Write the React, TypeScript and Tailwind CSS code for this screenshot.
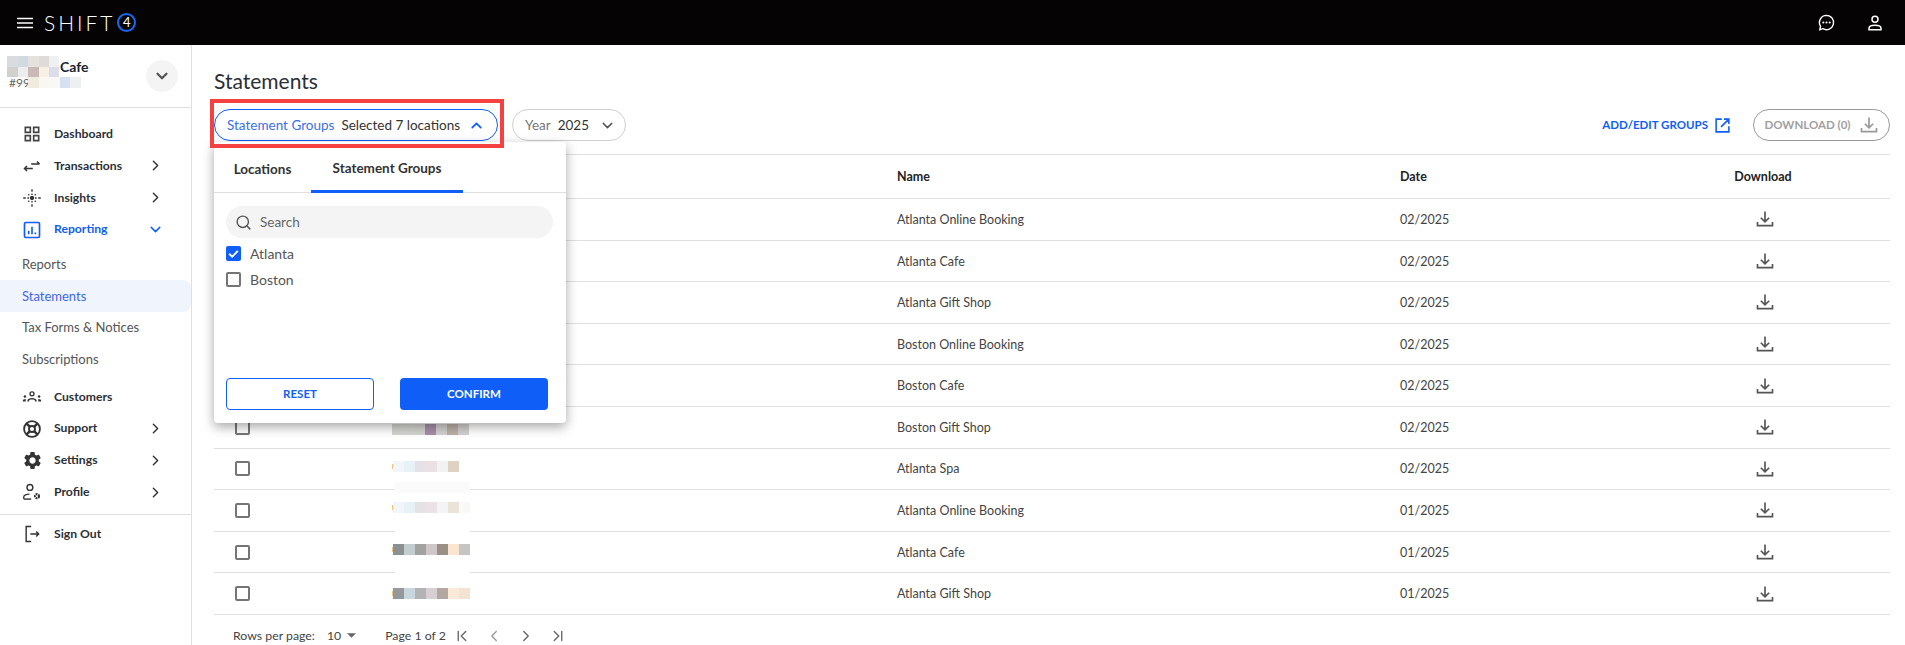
import { ChevronDown, ChevronFirst, ChevronLast, ChevronLeft, ChevronRight, ChevronUp, Search } from "lucide-react";
import type { ReactNode } from "react";

const ICON = "w-[20px] h-[20px] shrink-0";

function GridIcon() {
    return (
        <svg viewBox="0 0 24 24" className={ICON} fill="#444">
            <path d="M3 3v8h8V3H3zm6 6H5V5h4v4zm-6 4v8h8v-8H3zm6 6H5v-4h4v4zm4-16v8h8V3h-8zm6 6h-4V5h4v4zm-6 4v8h8v-8h-8zm6 6h-4v-4h4v4z" />
        </svg>
    );
}

function SwapIcon() {
    return (
        <svg viewBox="0 0 24 24" className={ICON} fill="none" stroke="#333" strokeWidth="1.8">
            <path d="M11 9.5h10M18 6.5l3 3M3 15h10M6 12l-3 3 3 3" />
        </svg>
    );
}

function InsightsIcon() {
    return (
        <svg viewBox="0 0 24 24" className={ICON} fill="none" stroke="#333" strokeWidth="1.6">
            <circle cx="12" cy="12" r="2.6" fill="#333" stroke="none" />
            <path d="M12 1.5v3M12 6.5v2M12 15.5v2M12 19.5v3M1.5 12h3M6.5 12h2M15.5 12h2M19.5 12h3M7.5 7.5l1.2 1.2M16.5 7.5l-1.2 1.2M7.5 16.5l1.2-1.2M16.5 16.5l-1.2-1.2" />
        </svg>
    );
}

function ReportIcon() {
    return (
        <svg viewBox="0 0 24 24" className={ICON} fill="none" stroke="#0f5ef7" strokeWidth="2">
            <rect x="3" y="3" width="18" height="18" rx="1.5" />
            <path d="M8 17v-4M12 17V8M16 17v-2" />
        </svg>
    );
}

function GroupIcon() {
    return (
        <svg viewBox="0 0 24 24" className={ICON} fill="#333">
            <circle cx="12" cy="8.2" r="2.4" fill="none" stroke="#333" strokeWidth="1.6" />
            <path d="M6.5 17.5v-1.2c0-2 2.6-3.2 5.5-3.2s5.5 1.2 5.5 3.2v1.2h-2v-1.2c0-.7-1.5-1.4-3.5-1.4s-3.5.7-3.5 1.4v1.2z" />
            <circle cx="3.5" cy="11.5" r="1.5" />
            <circle cx="20.5" cy="11.5" r="1.5" />
            <path d="M1 17.5v-1c0-1.3 1.2-2.2 3.5-2.2v3.2zM23 17.5v-1c0-1.3-1.2-2.2-3.5-2.2v3.2z" />
        </svg>
    );
}

function SupportIcon() {
    return (
        <svg viewBox="0 0 24 24" className={ICON} fill="none" stroke="#333" strokeWidth="2.2">
            <circle cx="12" cy="12" r="9.5" />
            <circle cx="12" cy="12" r="3.6" />
            <path d="M5.5 5.5l4 4M18.5 5.5l-4 4M5.5 18.5l4-4M18.5 18.5l-4-4" strokeWidth="3" />
        </svg>
    );
}

function SettingsIcon() {
    return (
        <svg viewBox="0 0 24 24" className="w-[21px] h-[21px] shrink-0" fill="#333">
            <path d="M19.14 12.94c.04-.3.06-.61.06-.94 0-.32-.02-.64-.07-.94l2.03-1.58c.18-.14.23-.41.12-.61l-1.92-3.32c-.12-.22-.37-.29-.59-.22l-2.39.96c-.5-.38-1.03-.7-1.62-.94l-.36-2.54c-.04-.24-.24-.41-.48-.41h-3.84c-.24 0-.43.17-.47.41l-.36 2.54c-.59.24-1.13.57-1.62.94l-2.39-.96c-.22-.08-.47 0-.59.22L2.74 8.87c-.12.21-.08.47.12.61l2.03 1.58c-.05.3-.09.63-.09.94s.02.64.07.94l-2.03 1.58c-.18.14-.23.41-.12.61l1.92 3.32c.12.22.37.29.59.22l2.39-.96c.5.38 1.03.7 1.62.94l.36 2.54c.05.24.24.41.48.41h3.84c.24 0 .44-.17.47-.41l.36-2.54c.59-.24 1.13-.56 1.62-.94l2.39.96c.22.08.47 0 .59-.22l1.92-3.32c.12-.22.07-.47-.12-.61l-2.01-1.58zM12 15.6c-1.98 0-3.6-1.62-3.6-3.6s1.62-3.6 3.6-3.6 3.6 1.62 3.6 3.6-1.62 3.6-3.6 3.6z" />
        </svg>
    );
}

function ProfileIcon() {
    return (
        <svg viewBox="0 0 24 24" className={ICON} fill="none" stroke="#333" strokeWidth="1.7">
            <circle cx="9.5" cy="6.5" r="3.5" />
            <path d="M2 20v-1.5c0-2.5 3.5-4 7-4" />
            <path d="M2 20.5h9" />
            <circle cx="18" cy="17" r="2.4" strokeWidth="2.6" strokeDasharray="2 .9" />
        </svg>
    );
}

function SignOutIcon() {
    return (
        <svg viewBox="0 0 24 24" className={ICON} fill="none" stroke="#333" strokeWidth="1.7">
            <path d="M11 3H5v18h6M10 12h10M17 9l3 3-3 3" />
        </svg>
    );
}

function DownloadIcon({ color = "#555", size = "w-[20px] h-[20px]" }: { color?: string; size?: string }) {
    return (
        <svg viewBox="0 0 24 24" className={size} fill="none" stroke={color} strokeWidth="2">
            <path d="M12 3v12M7 10.5l5 5 5-5M3 15.5V20h18v-4.5" />
        </svg>
    );
}

function ExternalIcon() {
    return (
        <svg viewBox="0 0 24 24" className="w-[17px] h-[17px]" fill="none" stroke="#0f5ef7" strokeWidth="2.2">
            <path d="M11 3H3v18h18v-8M14 3h7v7M21 3L10 14" />
        </svg>
    );
}

function NavRow({ icon, label, arrow, active }: { icon: ReactNode; label: string; arrow?: "right" | "down"; active?: boolean }) {
    return (
        <div className="flex items-center h-[31.9px] pl-[22px]">
            <span className="w-[32px] flex items-center">{icon}</span>
            <span className={`w-[93px] text-[12.2px] font-bold ${active ? "text-[#0f5ef7]" : "text-[#2b2f36]"}`}>{label}</span>
            {arrow === "right" && <ChevronRight size={17} strokeWidth={2} className="text-[#333]" />}
            {arrow === "down" && <ChevronDown size={17} strokeWidth={2} className="text-[#0f5ef7]" />}
        </div>
    );
}

function SubRow({ label, active }: { label: string; active?: boolean }) {
    return (
        <div className={`h-[31.8px] flex items-center pl-[22px] text-[13px] rounded-r-lg ${active ? "bg-[#f0f4fd] text-[#3f66e8]" : "text-[#555]"}`}>
            {label}
        </div>
    );
}

function Sidebar() {
    return (
        <aside className="w-[192px] shrink-0 border-r border-[#e0e0e0] h-full">
            <div className="relative h-[63px] border-b border-[#e0e0e0] pt-[11px] pl-[7px]">
                <div className="flex items-start">
                    <div className="w-[53px]">
                        <div className="flex">
                            <i className="w-[11px] h-[11px] bg-[#dadbdf]" />
                            <i className="w-[10px] h-[11px] bg-[#d3d9e0]" />
                            <i className="w-[11px] h-[11px] bg-[#e5e2de]" />
                            <i className="w-[10px] h-[11px] bg-[#dedbd8]" />
                            <i className="w-[10px] h-[11px] bg-[#eef0f2]" />
                        </div>
                        <div className="flex">
                            <i className="w-[11px] h-[10px] bg-[#d0d0ce]" />
                            <i className="w-[10px] h-[10px] bg-[#ebedee]" />
                            <i className="w-[11px] h-[10px] bg-[#c9bab7]" />
                            <i className="w-[10px] h-[10px] bg-[#f8efe4]" />
                            <i className="w-[10px] h-[10px] bg-[#d9deea]" />
                        </div>
                    </div>
                    <span className="text-[14px] font-bold text-[#1b2430] leading-[21px]">Cafe</span>
                </div>
                <div className="flex items-center h-[11px] pl-[2px]">
                    <span className="text-[12px] text-[#666] w-[19px]">#99</span>
                    <i className="w-[11px] h-[11px] bg-[#f1ebdf]" />
                    <i className="w-[11px] h-[11px] bg-[#faf7f1]" />
                    <i className="w-[10px] h-[11px] bg-[#f9f8f6]" />
                    <i className="w-[10px] h-[11px] bg-[#d6e2f1]" />
                    <i className="w-[11px] h-[11px] bg-[#eeeff1]" />
                </div>
                <button className="absolute left-[146px] top-[15px] w-[32px] h-[32px] rounded-full bg-[#f4f4f4] flex items-center justify-center">
                    <ChevronDown size={18} strokeWidth={3} className="text-[#555]" />
                </button>
            </div>
            <div className="pt-[10px]">
                <NavRow icon={<GridIcon />} label="Dashboard" />
                <NavRow icon={<SwapIcon />} label="Transactions" arrow="right" />
                <NavRow icon={<InsightsIcon />} label="Insights" arrow="right" />
                <NavRow icon={<ReportIcon />} label="Reporting" arrow="down" active />
            </div>
            <div className="mt-[3px]">
                <SubRow label="Reports" />
                <SubRow label="Statements" active />
                <SubRow label="Tax Forms & Notices" />
                <SubRow label="Subscriptions" />
            </div>
            <div className="mt-[5px]">
                <NavRow icon={<GroupIcon />} label="Customers" />
                <NavRow icon={<SupportIcon />} label="Support" arrow="right" />
                <NavRow icon={<SettingsIcon />} label="Settings" arrow="right" />
                <NavRow icon={<ProfileIcon />} label="Profile" arrow="right" />
            </div>
            <div className="mt-[6px] border-t border-[#e0e0e0] pt-[3px]">
                <NavRow icon={<SignOutIcon />} label="Sign Out" />
            </div>
        </aside>
    );
}

function Checkbox({ checked }: { checked?: boolean }) {
    if (checked) {
        return (
            <span className="w-[15px] h-[15px] rounded-[2px] bg-[#0f5ef7] flex items-center justify-center shrink-0">
                <svg viewBox="0 0 24 24" className="w-[13px] h-[13px]" fill="none" stroke="#fff" strokeWidth="3.5">
                    <path d="M4 12.5l5.5 5.5L20 7" />
                </svg>
            </span>
        );
    }
    return <span className="block w-[15px] h-[15px] rounded-[2px] border-2 border-[#757575] shrink-0" />;
}

const ROWS = [
    { name: "Atlanta Online Booking", date: "02/2025", cells: [] },
    { name: "Atlanta Cafe", date: "02/2025", cells: [] },
    { name: "Atlanta Gift Shop", date: "02/2025", cells: [] },
    { name: "Boston Online Booking", date: "02/2025", cells: [] },
    { name: "Boston Cafe", date: "02/2025", cells: [] },
    {
        name: "Boston Gift Shop",
        date: "02/2025",
        cells: ["bg-[#d5d5d2]", "bg-[#d6d6d2]", "bg-[#d4d6d1]", "bg-[#a88fa8]", "bg-[#d4d3d2]", "bg-[#bdb1aa]", "bg-[#d3d2d1]"],
        offset: "mt-[4px] -ml-[1px]",
    },
    {
        name: "Atlanta Spa",
        date: "02/2025",
        cells: ["bg-[#f2f6fa]", "bg-[#e6f2f8]", "bg-[#e5e1e6]", "bg-[#ebe1e5]", "bg-[#f1f3f3]", "bg-[#e0d2c3]"],
        offset: "-mt-[5px]",
        tick: true,
        strip: "fill",
    },
    {
        name: "Atlanta Online Booking",
        date: "01/2025",
        cells: ["bg-[#f2f6fa]", "bg-[#e6f2f8]", "bg-[#e5e2e5]", "bg-[#ebe1e6]", "bg-[#f3f4f4]", "bg-[#ebe2d8]", "bg-[#f9f9f8]"],
        offset: "-mt-[5px]",
        tick: true,
        strip: "white",
    },
    {
        name: "Atlanta Cafe",
        date: "01/2025",
        cells: ["bg-[#8b9193]", "bg-[#c3cccf]", "bg-[#a2a2a3]", "bg-[#d0c7c9]", "bg-[#9a9087]", "bg-[#f9e5d0]", "bg-[#c5c5c4]"],
        offset: "-mt-[5px]",
        tick: true,
        strip: "white",
    },
    {
        name: "Atlanta Gift Shop",
        date: "01/2025",
        cells: ["bg-[#949a9c]", "bg-[#cad6dd]", "bg-[#b3b3b4]", "bg-[#d8cfd4]", "bg-[#b2a89f]", "bg-[#f9e9d9]", "bg-[#f3e3d2]"],
        offset: "",
        tick: true,
    },
];

function TableRow({ row }: { row: (typeof ROWS)[number] }) {
    return (
        <div className="grid grid-cols-[179px_504px_503px_236px_254px] items-center h-[41.6px] border-b border-[#e0e0e0] text-[12.5px] text-[#444]">
            <div className="pl-[21px]">
                <Checkbox />
            </div>
            <div className={`relative flex items-center ${row.offset ?? ""}`}>
                {row.tick && <i className="w-[1px] h-[5px] bg-[#f5c27a] -ml-[1px]" />}
                {row.cells.map((c, i) => (
                    <i key={i} className={`w-[11px] h-[11px] ${c}`} />
                ))}
                {row.strip === "fill" && <i className="absolute left-[2px] top-[21px] w-[75px] h-[11px] bg-[#fafafa]" />}
                {row.strip === "white" && <i className="absolute left-[2px] top-[20px] w-[75px] h-[11px] bg-white" />}
            </div>
            <div className="pt-[2px]">{row.name}</div>
            <div className="pt-[2px]">{row.date}</div>
            <div className="flex justify-center pl-[4px]">
                <DownloadIcon />
            </div>
        </div>
    );
}

function GroupsPopover() {
    return (
        <div className="absolute left-[4px] top-[43px] z-10 w-[352px] h-[281px] bg-white rounded-[4px] shadow-[0_4px_12px_rgba(0,0,0,0.35)] flex flex-col">
            <div className="flex h-[51px] border-b border-[#e0e0e0] text-[13.5px] font-bold text-[#333]">
                <div className="w-[97px] flex items-center justify-center pt-[5px]">Locations</div>
                <div className="w-[152px] flex items-center justify-center pt-[5px] border-b-[3px] border-[#0f5ef7] -mb-px">Statement Groups</div>
            </div>
            <div className="px-[12px] pt-[13px] flex flex-col flex-1">
                <div className="h-[32px] rounded-full bg-[#f4f4f4] w-[327px] flex items-center pl-[9px] gap-[8px] text-[13.5px] text-[#666]">
                    <Search size={17} strokeWidth={2} className="text-[#555]" />
                    Search
                </div>
                <label className="flex items-center gap-[9px] h-[26px] mt-[2px] text-[14px] text-[#555]">
                    <Checkbox checked />
                    Atlanta
                </label>
                <label className="flex items-center gap-[9px] h-[26px] text-[14px] text-[#555]">
                    <Checkbox />
                    Boston
                </label>
                <div className="flex gap-[26px] mt-auto mb-[13px]">
                    <button className="w-[148px] h-[32px] rounded-[4px] border border-[#0f5ef7] text-[#0f5ef7] text-[11.5px] font-bold">RESET</button>
                    <button className="w-[148px] h-[32px] rounded-[4px] bg-[#0f5ef7] text-white text-[11.5px] font-bold">CONFIRM</button>
                </div>
            </div>
        </div>
    );
}

export default function App() {
    return (
        <div className="h-[645px] overflow-hidden flex flex-col bg-white font-['Lato',sans-serif]">
            <header className="h-[45px] shrink-0 bg-[#050304] flex items-center text-white">
                <svg viewBox="0 0 16 12" className="ml-[17px] w-[16px] h-[12px]" fill="none" stroke="#fff" strokeWidth="1.7">
                    <path d="M0 1.5h16M0 6h16M0 10.5h16" />
                </svg>
                <span className="ml-[11px] text-[21px] font-light tracking-[0.14em]">SHIFT</span>
                <span className="ml-[2px] w-[19px] h-[19px] rounded-full border-2 border-[#1668f0] flex items-center justify-center text-[13px] leading-none">4</span>
                <div className="ml-auto flex items-center">
                    <svg viewBox="0 0 24 24" className="w-[19px] h-[19px] mr-[30px]" fill="none" stroke="#fff" strokeWidth="1.8">
                        <path d="M12 3a9 9 0 1 1-4.5 16.8L3.500 21l1-4.2A9 9 0 0 1 12 3z" />
                        <circle cx="8" cy="12" r="1.3" fill="#fff" stroke="none" />
                        <circle cx="12" cy="12" r="1.3" fill="#fff" stroke="none" />
                        <circle cx="16" cy="12" r="1.3" fill="#fff" stroke="none" />
                    </svg>
                    <svg viewBox="0 0 24 24" className="w-[18px] h-[18px] mr-[21px]" fill="none" stroke="#fff" strokeWidth="2">
                        <circle cx="12" cy="7" r="4" />
                        <path d="M4 21v-2c0-2.5 3.5-4 8-4s8 1.5 8 4v2z" />
                    </svg>
                </div>
            </header>
            <div className="flex flex-1 min-h-0">
                <Sidebar />
                <main className="flex-1 min-w-0 pl-[22px] pr-[15px] pt-[22px]">
                    <h1 className="text-[21px] leading-[28px] text-[#2b2f36]">Statements</h1>
                    <div className="flex items-start mt-[4px]">
                        <div className="relative -ml-[4px] p-[4px] pt-[10px] pb-[7px] pr-[6px]">
                            <button className="w-[284px] h-[32px] rounded-full border border-[#0f5ef7] flex items-center pl-[12px] text-[13.5px] whitespace-nowrap">
                                <span className="text-[#3a6fe8]">Statement Groups</span>
                                <span className="ml-[7px] text-[#333]">Selected 7 locations</span>
                                <ChevronUp size={17} strokeWidth={2.5} className="ml-[8px] text-[#0f5ef7]" />
                            </button>
                            <GroupsPopover />
                            <div className="absolute inset-0 z-20 border-4 border-[#f44242] pointer-events-none" />
                        </div>
                        <button className="ml-[8px] mt-[10px] w-[114px] h-[32px] rounded-full border border-[#d0d0d0] flex items-center pl-[12px] text-[13.5px]">
                            <span className="text-[#777]">Year</span>
                            <span className="ml-[7px] text-[#333]">2025</span>
                            <ChevronDown size={17} strokeWidth={2} className="ml-[10px] text-[#555]" />
                        </button>
                        <div className="ml-auto mt-[10px] flex items-center">
                            <span className="text-[11.5px] font-bold text-[#0f5ef7]">ADD/EDIT GROUPS</span>
                            <span className="ml-[6px] mr-[22px]">
                                <ExternalIcon />
                            </span>
                            <button className="w-[137px] h-[32px] rounded-full border border-[#999] flex items-center justify-center gap-[8px] text-[11.5px] font-bold text-[#a0a0a0]">
                                DOWNLOAD (0)
                                <DownloadIcon color="#999" />
                            </button>
                        </div>
                    </div>
                    <div className="mt-[6px] border-t border-[#e0e0e0]">
                        <div className="grid grid-cols-[179px_504px_503px_236px_254px] items-center h-[44px] border-b border-[#e0e0e0] text-[12.5px] font-bold text-[#222]">
                            <div />
                            <div />
                            <div className="pt-[2px]">Name</div>
                            <div className="pt-[2px]">Date</div>
                            <div className="pt-[2px] text-center">Download</div>
                        </div>
                        {ROWS.map((r, i) => (
                            <TableRow key={i} row={r} />
                        ))}
                    </div>
                    <div className="flex items-center h-[42px] pl-[19px] text-[12.3px] text-[#444]">
                        <span>Rows per page:</span>
                        <span className="ml-[12px]">10</span>
                        <svg viewBox="0 0 10 5" className="ml-[6px] w-[9px] h-[5px]" fill="#666">
                            <path d="M0 0h10L5 5z" />
                        </svg>
                        <span className="ml-[29px]">Page 1 of 2</span>
                        <div className="ml-[7px] flex items-center gap-[14px] text-[#666]">
                            <ChevronFirst size={18} strokeWidth={1.8} />
                            <ChevronLeft size={18} strokeWidth={1.8} className="text-[#999]" />
                            <ChevronRight size={18} strokeWidth={1.8} />
                            <ChevronLast size={18} strokeWidth={1.8} />
                        </div>
                    </div>
                </main>
            </div>
        </div>
    );
}
